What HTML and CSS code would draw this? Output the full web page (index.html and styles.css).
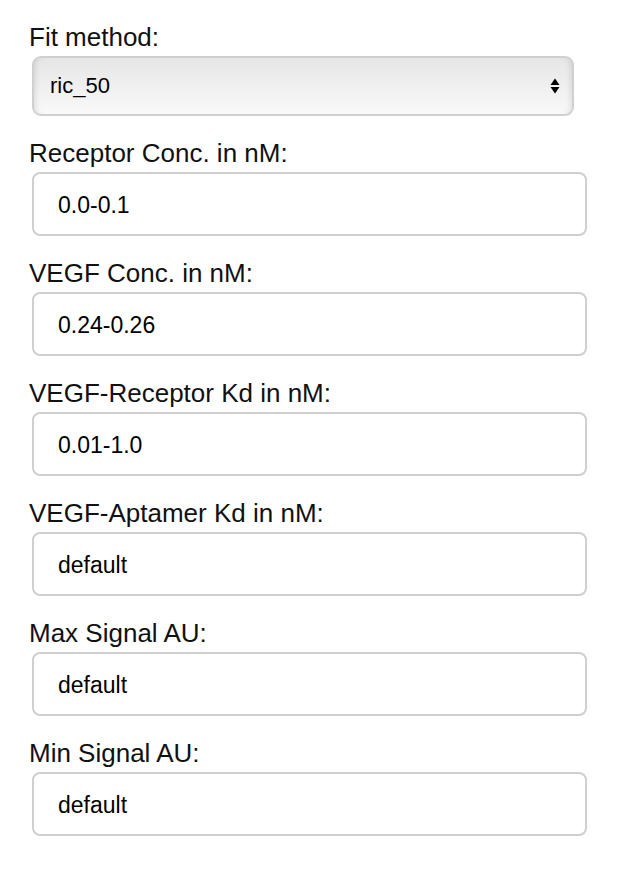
FILE: index.html
```html
<!DOCTYPE html>
<html>
<head>
<meta charset="utf-8">
<link rel="stylesheet" href="styles.css">
</head>
<body>
<form class="form">
  <div class="group">
    <label class="label">Fit method:</label>
    <div class="select">
      <span class="select-value">ric_50</span>
      <svg class="arrows" width="10" height="16" viewBox="0 0 10 16"><path d="M5 0.5 L9.5 7 L0.5 7 Z" fill="#000"/><path d="M0.5 9 L9.5 9 L5 15.5 Z" fill="#000"/></svg>
    </div>
  </div>
  <div class="group">
    <label class="label">Receptor Conc. in nM:</label>
    <div class="input">0.0-0.1</div>
  </div>
  <div class="group">
    <label class="label">VEGF Conc. in nM:</label>
    <div class="input">0.24-0.26</div>
  </div>
  <div class="group">
    <label class="label">VEGF-Receptor Kd in nM:</label>
    <div class="input">0.01-1.0</div>
  </div>
  <div class="group">
    <label class="label">VEGF-Aptamer Kd in nM:</label>
    <div class="input">default</div>
  </div>
  <div class="group">
    <label class="label">Max Signal AU:</label>
    <div class="input">default</div>
  </div>
  <div class="group">
    <label class="label">Min Signal AU:</label>
    <div class="input">default</div>
  </div>
</form>
</body>
</html>
```
FILE: styles.css
```css
html, body {
  margin: 0;
  padding: 0;
  background: #fff;
}
body {
  font-family: "Liberation Sans", Arial, sans-serif;
  color: #000;
}
.form {
  display: flex;
  flex-direction: column;
  gap: 18px;
  padding: 18px 0 0 29px;
}
.group {
  display: flex;
  flex-direction: column;
  gap: 4px;
}
.label {
  font-size: 26px;
  line-height: 30px;
  padding-top: 4px;
  color: #111;
}
.select {
  margin-left: 3px;
  width: 542px;
  height: 60px;
  box-sizing: border-box;
  border: 2px solid #d0d0d0;
  border-radius: 9px;
  background: linear-gradient(#e6e6e6, #f9f9f9);
  box-shadow: inset 6px 0 6px -5px rgba(0,0,0,0.12), inset -6px 0 6px -5px rgba(0,0,0,0.12);
  display: flex;
  align-items: center;
  justify-content: space-between;
  padding: 0 12px 0 16px;
}
.select-value {
  font-size: 22px;
}
.arrows {
  display: block;
}
.input {
  margin-left: 3px;
  width: 555px;
  height: 64px;
  box-sizing: border-box;
  border: 2px solid #cfcfcf;
  border-radius: 8px;
  padding: 2px 24px 0 24px;
  display: flex;
  align-items: center;
  font-size: 23px;
}
```
